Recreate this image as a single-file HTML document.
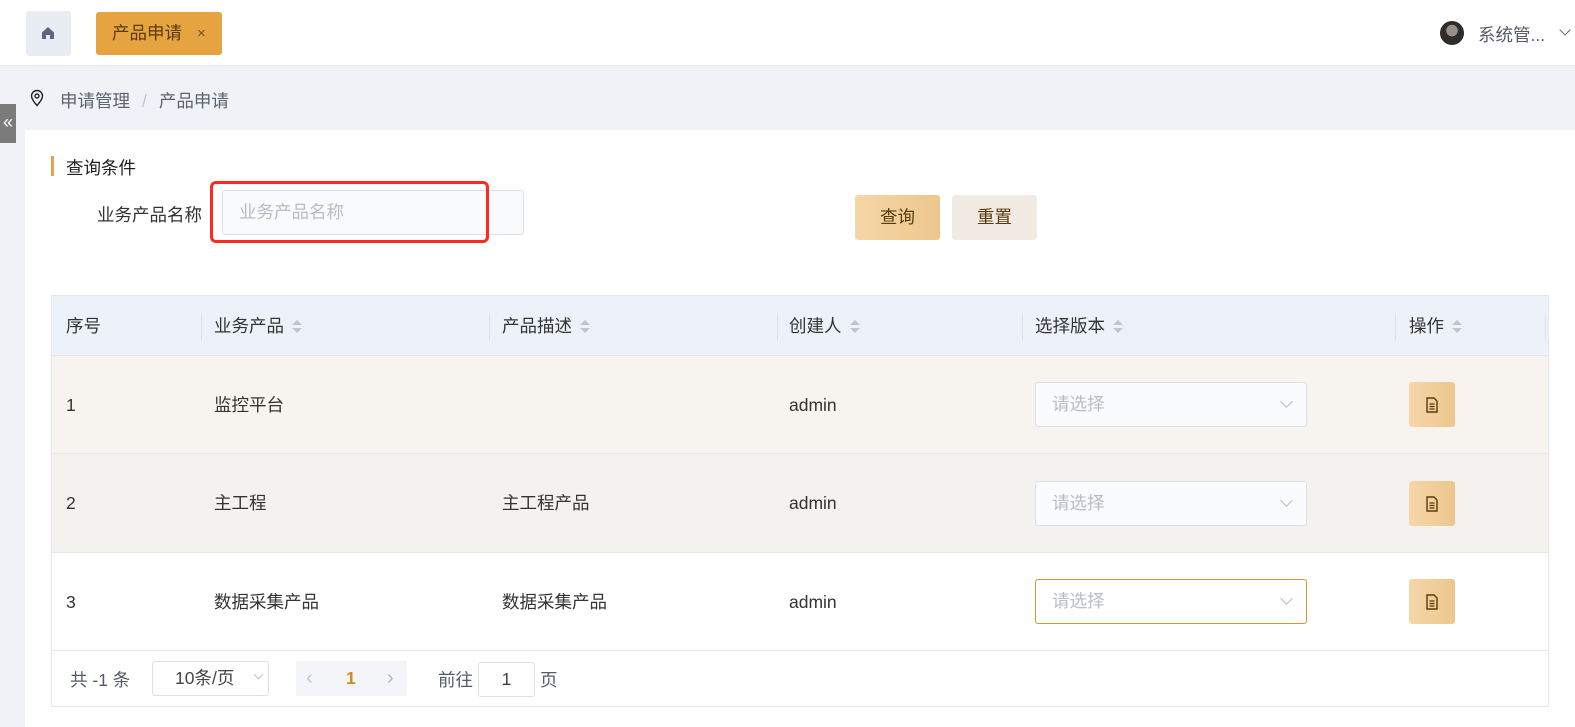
<!DOCTYPE html>
<html><head><meta charset="utf-8"><style>
*{box-sizing:border-box;margin:0;padding:0}
body{width:1575px;height:727px;overflow:hidden;background:#f0f2f7;font-family:"Liberation Sans","Noto Sans CJK SC",sans-serif;font-size:17.5px;color:#333;position:relative}
.abs{position:absolute}
.top{left:0;top:0;width:1575px;height:66px;background:#fff;border-bottom:1px solid #e4e6ec}
.sel{border:1px solid #dcdfe6;background:#fafbfc;border-radius:3px;color:#b8bcc4}
.chev{position:absolute;width:9px;height:9px;border-right:1px solid #b8bcc4;border-bottom:1px solid #b8bcc4;transform:rotate(45deg)}
.sort{display:inline-block;vertical-align:middle;margin-left:8px;width:10px;height:14px;position:relative}
.sort:before{content:"";position:absolute;left:0;top:0;border:5px solid transparent;border-bottom:5px solid #c0c4cc;border-top:0}
.sort:after{content:"";position:absolute;left:0;top:8px;border:5px solid transparent;border-top:5px solid #c0c4cc;border-bottom:0}
.th{position:absolute;top:0;height:60px;line-height:60px;color:#333}
.dv{position:absolute;top:17px;width:1px;height:28px;background:#dfe2e8}
.row{position:absolute;left:0;width:1496px}
.cell{position:absolute;top:0;line-height:inherit}
.btn{position:absolute;width:46px;height:45px;border-radius:3px;background:linear-gradient(90deg,#f6d7a9,#ecc68d)}
</style></head><body>
<div class="abs top">
  <div class="abs" style="left:26px;top:11px;width:45px;height:45px;background:#e9ecf3;border-radius:3px">
    <svg class="abs" style="left:15px;top:15px" width="14" height="14" viewBox="0 0 14 14"><path d="M7 1 L13 6.5 V13 H9 V9 H5 V13 H1 V6.5 Z" fill="#5c6680"/></svg>
  </div>
  <div class="abs" style="left:96px;top:12px;width:126px;height:43px;background:#e5a43f;border-radius:3px;color:#5a3a0c;line-height:43px;padding-left:16px">产品申请<span style="position:absolute;left:101px;color:#6a5030;font-size:15px">×</span></div>
  <div class="abs" style="left:1440px;top:21px;width:24px;height:24px;border-radius:50%;background:radial-gradient(circle at 50% 40%,#9a8f88 0 30%,#2e2c2c 32%)"></div>
  <div class="abs" style="left:1478px;top:22px;color:#555b66">系统管...</div>
  <div class="chev" style="left:1561px;top:26px;border-color:#666;width:8px;height:8px"></div>
</div>
<svg class="abs" style="left:29px;top:89px" width="16" height="18" viewBox="0 0 16 18"><path d="M8 16.5 C4 12 2.5 9.5 2.5 7 A5.5 5.5 0 0 1 13.5 7 C13.5 9.5 12 12 8 16.5Z" fill="none" stroke="#222" stroke-width="1.4"/><circle cx="8" cy="7" r="2" fill="none" stroke="#222" stroke-width="1.4"/></svg>
<div class="abs" style="left:60px;top:88px;color:#5c6270">申请管理<span style="color:#c0c4cc;margin:0 12px">/</span>产品申请</div>
<div class="abs" style="left:0;top:104px;width:16px;height:39px;background:#7b7b7b;color:#fff;font-size:18px;line-height:36px;text-align:center">«</div>
<div class="abs" style="left:25px;top:130px;width:1550px;height:597px;background:#fff"></div>
<div class="abs" style="left:51px;top:156px;width:3px;height:20px;background:#e5a43f"></div>
<div class="abs" style="left:66px;top:155px;color:#222">查询条件</div>
<div class="abs" style="left:97px;top:202px;color:#333">业务产品名称</div>
<div class="abs sel" style="left:222px;top:190px;width:302px;height:45px;line-height:43px;padding-left:16px;background:#f9fafc">业务产品名称</div>
<div class="abs" style="left:210px;top:181px;width:279px;height:62px;border:3px solid #ff2a1f;border-radius:6px"></div>
<div class="abs" style="left:855px;top:195px;width:85px;height:45px;border-radius:3px;background:linear-gradient(90deg,#f6d7a9,#ecc68d);color:#5a3a0c;text-align:center;line-height:45px">查询</div>
<div class="abs" style="left:952px;top:195px;width:85px;height:45px;border-radius:3px;background:#f2ebe3;color:#5a3a0c;text-align:center;line-height:45px">重置</div>

<div class="abs" style="left:51px;top:295px;width:1498px;height:412px;border:1px solid #e4e6ec;background:#fff">
  <div class="row" style="top:0;height:60px;background:#edf1f9;border-bottom:1px solid #e4e6ec">
    <div class="th" style="left:14px">序号</div>
    <div class="dv" style="left:149px"></div>
    <div class="th" style="left:162px">业务产品<span class="sort"></span></div>
    <div class="dv" style="left:437px"></div>
    <div class="th" style="left:450px">产品描述<span class="sort"></span></div>
    <div class="dv" style="left:725px"></div>
    <div class="th" style="left:737px">创建人<span class="sort"></span></div>
    <div class="dv" style="left:970px"></div>
    <div class="th" style="left:983px">选择版本<span class="sort"></span></div>
    <div class="dv" style="left:1343px"></div>
    <div class="th" style="left:1357px">操作<span class="sort"></span></div>
    <div class="dv" style="left:1493px"></div>
  </div>
  <div class="row" style="top:60px;height:98px;line-height:98px;background:#f7f4ef;border-bottom:1px solid #e9eaee">
    <div class="cell" style="left:14px">1</div><div class="cell" style="left:162px">监控平台</div><div class="cell" style="left:737px">admin</div>
    <div class="abs sel" style="left:983px;top:26px;width:272px;height:45px;line-height:43px;padding-left:16px">请选择<div class="chev" style="left:246px;top:14px"></div></div>
    <div class="btn" style="left:1357px;top:26px"><svg class="abs" style="left:16px;top:15px" width="14" height="16" viewBox="0 0 14 16"><path d="M2 1H9L12 4V15H2Z" fill="none" stroke="#5a3a0c" stroke-width="1.4"/><path d="M4.5 7H9.5M4.5 9.5H9.5M4.5 12H9.5" stroke="#5a3a0c" stroke-width="1.2"/></svg></div>
  </div>
  <div class="row" style="top:158px;height:99px;line-height:99px;background:#f4f2ee;border-bottom:1px solid #e9eaee">
    <div class="cell" style="left:14px">2</div><div class="cell" style="left:162px">主工程</div><div class="cell" style="left:450px">主工程产品</div><div class="cell" style="left:737px">admin</div>
    <div class="abs sel" style="left:983px;top:27px;width:272px;height:45px;line-height:43px;padding-left:16px">请选择<div class="chev" style="left:246px;top:14px"></div></div>
    <div class="btn" style="left:1357px;top:27px"><svg class="abs" style="left:16px;top:15px" width="14" height="16" viewBox="0 0 14 16"><path d="M2 1H9L12 4V15H2Z" fill="none" stroke="#5a3a0c" stroke-width="1.4"/><path d="M4.5 7H9.5M4.5 9.5H9.5M4.5 12H9.5" stroke="#5a3a0c" stroke-width="1.2"/></svg></div>
  </div>
  <div class="row" style="top:257px;height:98px;line-height:98px;background:#fff;border-bottom:1px solid #e4e6ec">
    <div class="cell" style="left:14px">3</div><div class="cell" style="left:162px">数据采集产品</div><div class="cell" style="left:450px">数据采集产品</div><div class="cell" style="left:737px">admin</div>
    <div class="abs sel" style="left:983px;top:26px;width:272px;height:45px;line-height:43px;padding-left:16px;border-color:#d4972e;background:#fff">请选择<div class="chev" style="left:246px;top:14px"></div></div>
    <div class="btn" style="left:1357px;top:26px"><svg class="abs" style="left:16px;top:15px" width="14" height="16" viewBox="0 0 14 16"><path d="M2 1H9L12 4V15H2Z" fill="none" stroke="#5a3a0c" stroke-width="1.4"/><path d="M4.5 7H9.5M4.5 9.5H9.5M4.5 12H9.5" stroke="#5a3a0c" stroke-width="1.2"/></svg></div>
  </div>
  <div class="abs" style="left:18px;top:371px;color:#555b66">共 -1 条</div>
  <div class="abs" style="left:100px;top:365px;width:117px;height:35px;border:1px solid #dcdfe6;border-radius:3px;line-height:33px;padding-left:22px;color:#444">10条/页<div class="chev" style="left:102px;top:9px;width:7px;height:7px;border-color:#c0c4cc"></div></div>
  <div class="abs" style="left:244px;top:365px;width:111px;height:35px;background:#f4f5f8;line-height:35px">
    <span class="abs" style="left:10px;color:#c0c4cc;font-size:20px">‹</span>
    <span class="abs" style="left:50px;color:#d4891c;font-weight:bold">1</span>
    <span class="abs" style="left:91px;color:#b0b4bc;font-size:20px">›</span>
  </div>
  <div class="abs" style="left:386px;top:371px;color:#555b66">前往</div>
  <div class="abs" style="left:426px;top:366px;width:57px;height:35px;border:1px solid #dcdfe6;border-radius:3px;text-align:center;line-height:33px;color:#444">1</div>
  <div class="abs" style="left:488px;top:371px;color:#555b66">页</div>
</div>
</body></html>
